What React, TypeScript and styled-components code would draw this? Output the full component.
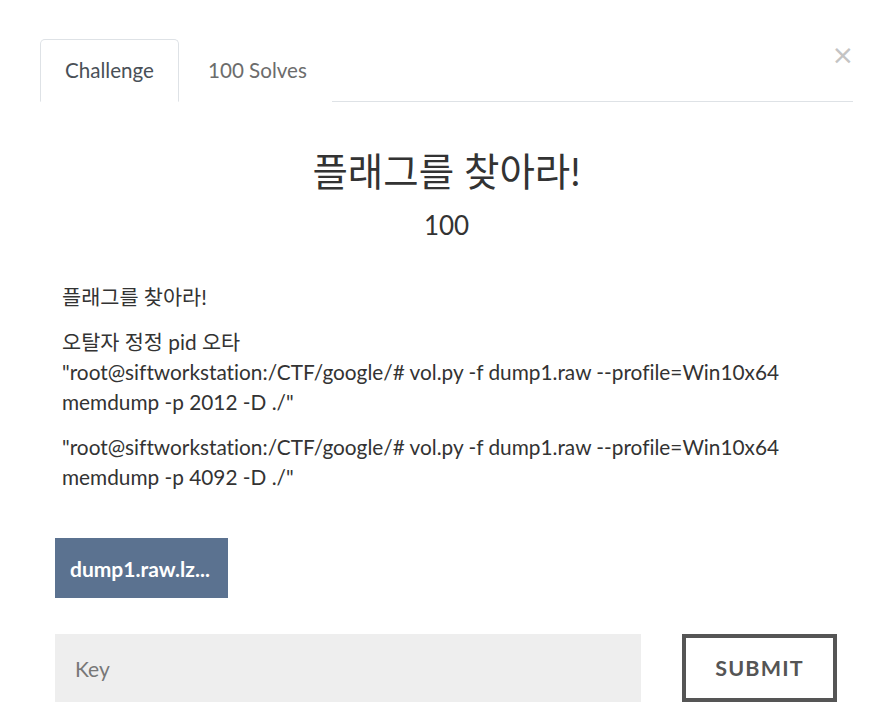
import React, { useState } from "react";
import styled, { createGlobalStyle } from "styled-components";

const GlobalStyle = createGlobalStyle`
  * { box-sizing: border-box; }
  html, body { margin: 0; padding: 0; background: #fff; }
  body {
    font-family: Lato, "Noto Sans CJK KR", sans-serif;
    color: #333;
  }
`;

const Modal = styled.div`
  position: relative;
  width: 890px;
  padding: 39px 37px 20px 40px;
`;

const CloseButton = styled.button`
  position: absolute;
  top: 41px;
  right: 36px;
  border: 0;
  background: none;
  padding: 0;
  font-family: "DejaVu Sans", sans-serif;
  font-size: 27px;
  line-height: 1;
  color: #c4c4c4;
  cursor: pointer;
`;

const TabBar = styled.nav`
  display: flex;
  border-bottom: 1px solid #dee2e6;
  width: 813px;
`;

const Tab = styled.button<{ $active?: boolean }>`
  height: 63px;
  margin-bottom: -1px;
  padding: 0 24px 2px;
  font-family: Lato, sans-serif;
  font-size: 20.6px;
  color: ${(p) => (p.$active ? "#495057" : "#6c6c6c")};
  background: #fff;
  border: 1px solid ${(p) => (p.$active ? "#dee2e6" : "transparent")};
  border-bottom-color: ${(p) => (p.$active ? "#fff" : "transparent")};
  border-radius: 5px 5px 0 0;
  cursor: pointer;
  & + & {
    padding-left: 28px;
  }
`;

const Header = styled.header`
  display: flex;
  flex-direction: column;
  align-items: center;
  padding-top: 43px;
  width: 813px;
`;

const Title = styled.h3`
  margin: 0;
  font-family: Lato, "Noto Sans CJK KR", sans-serif;
  font-weight: 400;
  font-size: 38.5px;
  line-height: 52px;
  color: #333;
`;

const Value = styled.h4`
  margin: 8px 0 0;
  font-family: Lato, sans-serif;
  font-weight: 400;
  font-size: 26px;
  line-height: 40px;
  color: #333;
`;

const Description = styled.div`
  padding: 37px 0 0 22px;
  font-size: 20.8px;
  line-height: 30px;
  color: #333;
  font-variant-ligatures: none;
`;

const Para = styled.p`
  margin: 0 0 15px;
`;

const Files = styled.div`
  display: flex;
  gap: 10px;
  padding: 31px 0 0 15px;
`;

const FileButton = styled.a`
  display: inline-flex;
  align-items: center;
  height: 60px;
  padding: 0 18px 0 15px;
  background: #5b7290;
  color: #fff;
  font-family: Lato, sans-serif;
  font-weight: 700;
  font-size: 21px;
  text-decoration: none;
  cursor: pointer;
`;

const SubmitRow = styled.form`
  display: flex;
  align-items: stretch;
  gap: 41px;
  padding: 36px 0 0 15px;
`;

const KeyInput = styled.input`
  width: 586px;
  height: 68px;
  border: 0;
  background: #eee;
  padding: 0 20px;
  font-family: Lato, sans-serif;
  font-size: 21px;
  color: #333;
  outline: none;
  &::placeholder {
    color: #777;
  }
`;

const SubmitButton = styled.button`
  width: 155px;
  height: 68px;
  border: 4px solid #555;
  background: #fff;
  font-family: Lato, sans-serif;
  font-weight: 700;
  font-size: 21.5px;
  letter-spacing: 1.2px;
  color: #555;
  cursor: pointer;
`;

export default function App() {
  const [tab, setTab] = useState("challenge");
  const [key, setKey] = useState("");

  return (
    <>
      <GlobalStyle />
      <Modal>
        <CloseButton aria-label="Close">×</CloseButton>
        <TabBar>
          <Tab $active={tab === "challenge"} onClick={() => setTab("challenge")}>
            Challenge
          </Tab>
          <Tab $active={tab === "solves"} onClick={() => setTab("solves")}>
            100 Solves
          </Tab>
        </TabBar>

        <Header>
          <Title>플래그를 찾아라!</Title>
          <Value>100</Value>
        </Header>

        <Description>
          <Para>플래그를 찾아라!</Para>
          <Para>
            오탈자 정정 pid 오타
            <br />
            "root@siftworkstation:/CTF/google/# vol.py -f dump1.raw --profile=Win10x64 memdump -p 2012 -D ./"
          </Para>
          <Para>
            "root@siftworkstation:/CTF/google/# vol.py -f dump1.raw --profile=Win10x64 memdump -p 4092 -D ./"
          </Para>
        </Description>

        <Files>
          <FileButton>dump1.raw.lz...</FileButton>
        </Files>

        <SubmitRow onSubmit={(e) => e.preventDefault()}>
          <KeyInput placeholder="Key" value={key} onChange={(e) => setKey(e.target.value)} />
          <SubmitButton type="submit">SUBMIT</SubmitButton>
        </SubmitRow>
      </Modal>
    </>
  );
}
